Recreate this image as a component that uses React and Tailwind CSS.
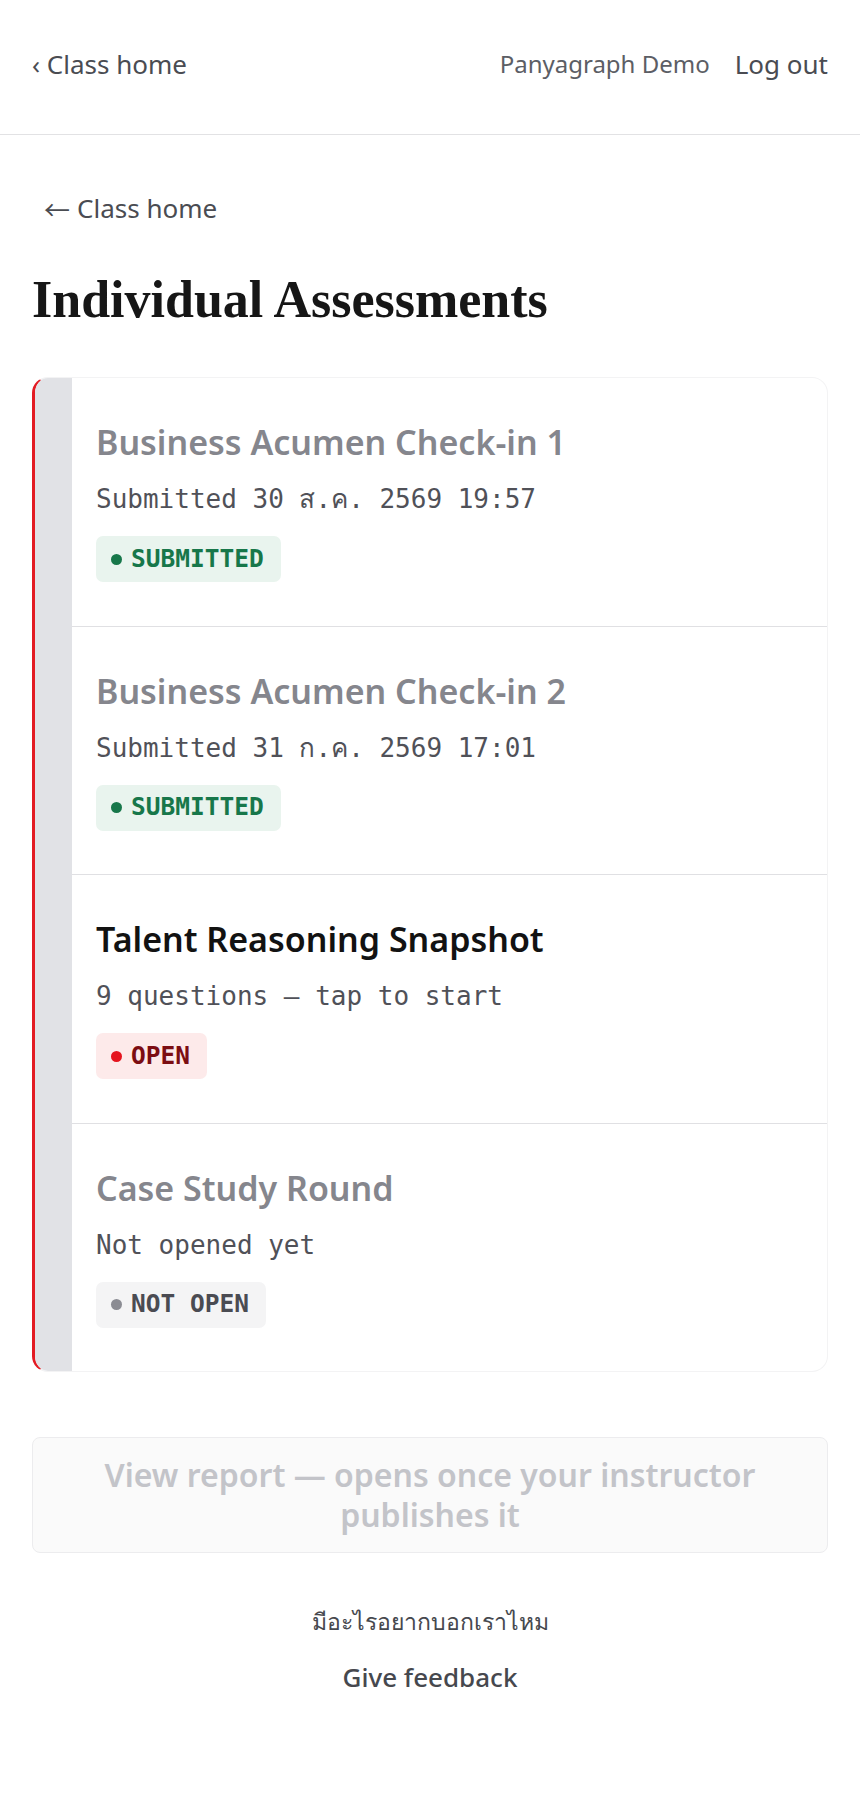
import React from 'react'

const items = [
  { title: 'Business Acumen Check-in 1', sub: 'Submitted 30 ส.ค. 2569 19:57', status: 'submitted' },
  { title: 'Business Acumen Check-in 2', sub: 'Submitted 31 ก.ค. 2569 17:01', status: 'submitted' },
  { title: 'Talent Reasoning Snapshot', sub: '9 questions — tap to start', status: 'open' },
  { title: 'Case Study Round', sub: 'Not opened yet', status: 'closed' },
]

const badgeStyles = {
  submitted: { label: 'SUBMITTED', box: 'bg-[#e9f4ee] text-[#17774a]', dot: 'bg-[#17774a]' },
  open: { label: 'OPEN', box: 'bg-[#fdeaea] text-[#7c0d12]', dot: 'bg-[#e5141e]' },
  closed: { label: 'NOT OPEN', box: 'bg-[#f4f4f5] text-[#4a4b52]', dot: 'bg-[#8b8c93]' },
}

const mono = { fontFamily: '"DejaVu Sans Mono", "Liberation Mono", monospace' }

function Badge({ status }) {
  const s = badgeStyles[status]
  return (
    <span className={`inline-flex items-center gap-[9px] rounded-[7px] pl-[15px] pr-[17px] h-[46px] font-bold text-[24.5px] ${s.box}`} style={mono}>
      <span className={`w-[11px] h-[11px] rounded-full ${s.dot}`} />
      {s.label}
    </span>
  )
}

function AssessmentRow({ item }) {
  const muted = item.status !== 'open'
  return (
    <div className="px-6 pt-[40px] pb-[43.5px]">
      <div className={`text-[34px] font-semibold leading-[48px] ${muted ? 'text-[#85868d]' : 'text-[#121212]'}`}>
        {item.title}
      </div>
      <div className="mt-[14px] text-[26px] leading-[39px] text-[#505158]" style={mono}>
        {item.sub}
      </div>
      <div className="mt-[17px] flex">
        <Badge status={item.status} />
      </div>
    </div>
  )
}

export default function App() {
  return (
    <div className="min-h-[1800px] bg-white text-[#45474d]" style={{ fontFamily: '"Noto Sans", sans-serif' }}>
      {/* top bar */}
      <header className="h-[135px] px-8 pb-[6px] flex items-center justify-between border-b border-[#e2e2e4]">
        <a className="text-[26px] text-[#4a4c52]">‹ Class home</a>
        <div className="flex items-center gap-[25px]">
          <span className="text-[24px] text-[#5c5e65]">Panyagraph Demo</span>
          <a className="text-[26px] text-[#4a4c52]">Log out</a>
        </div>
      </header>

      <main className="px-8 pt-[54px]">
        <a className="flex items-center gap-[7px] pl-[12px] text-[26px] leading-[39px] text-[#4a4c52]">
          <span style={{ fontFamily: '"Noto Sans CJK JP", sans-serif' }}>←</span>
          <span>Class home</span>
        </a>

        <h1 className="mt-[41px] text-[52px] leading-[62px] font-bold text-[#161616]" style={{ fontFamily: '"Liberation Serif", serif' }}>
          Individual Assessments
        </h1>

        {/* list card */}
        <div className="mt-[46px] flex rounded-[16px] overflow-hidden border border-[#f3f3f4] border-l-[3px] border-l-[#e31b23]">
          <div className="w-[37px] shrink-0 bg-[#e1e2e6]" />
          <div className="flex-1 divide-y divide-[#e0e0e3]">
            {items.map((item) => (
              <AssessmentRow key={item.title} item={item} />
            ))}
          </div>
        </div>

        <button className="mt-[65px] w-full h-[116px] rounded-[8px] border border-[#ececee] bg-[#fafafa] px-14 text-[32px] leading-[40px] font-semibold text-[#c3c4c9]">
          View report — opens once your instructor publishes it
        </button>

        <div className="mt-[50px] flex flex-col items-center gap-[19px]">
          <div className="text-[23px] leading-[36px] text-[#46484e]">มีอะไรอยากบอกเราไหม</div>
          <a className="text-[26px] leading-[39px] font-medium text-[#46484e]">Give feedback</a>
        </div>
      </main>
    </div>
  )
}
